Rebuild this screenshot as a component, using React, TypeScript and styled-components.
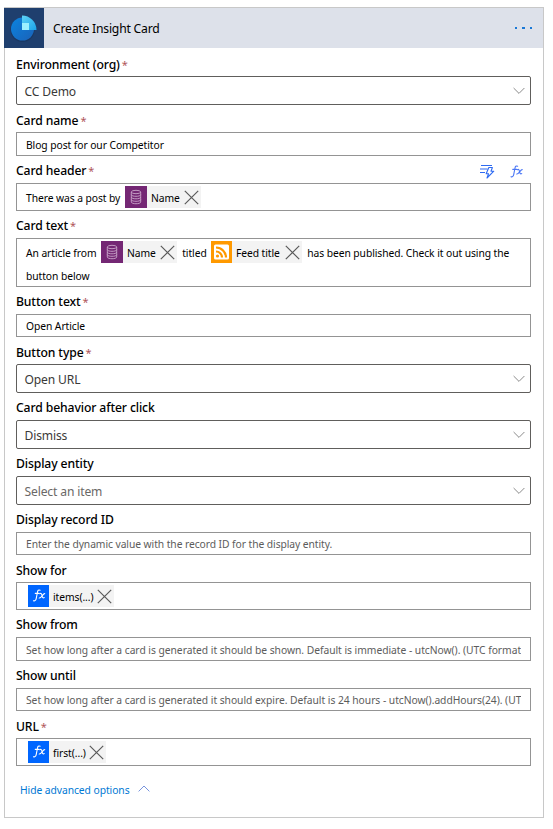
import React from 'react';
import styled, { createGlobalStyle } from 'styled-components';

const Global = createGlobalStyle`
  * { box-sizing: border-box; }
  body { margin: 0; background: #fff; font-family: "Noto Sans", "Open Sans", sans-serif; color: #000; }
`;

const Card = styled.section`
  width: 540px;
  height: 811px;
  margin: 7px 0 0 4px;
  border: 1px solid #c8c8c8;
  background: #fff;
`;

const Header = styled.header`
  display: flex;
  align-items: center;
  height: 40px;
  margin-left: -1px;
  background: #dde1ea;
`;

const Logo = styled.div`
  width: 40px;
  height: 40px;
  background: #1f3f6e;
  svg { display: block; }
`;

const Title = styled.h1`
  flex: 1;
  margin: 2px 0 0 9px;
  font-size: 12.2px;
  font-weight: 400;
  letter-spacing: -0.22px;
  line-height: 18px;
`;

const More = styled.button`
  display: flex;
  gap: 5px;
  padding: 0;
  margin: 0 11px 0 0;
  border: 0;
  background: none;
  i { width: 2.5px; height: 2px; background: #1a78d6; }
`;

const Form = styled.div`
  padding: 1px 12px 0 11px;
`;

const LabelRow = styled.div<{ $drop: number }>`
  display: flex;
  align-items: flex-start;
  justify-content: space-between;
  height: 27px;
  padding-top: ${p => p.$drop}px;
`;

const Label = styled.label`
  font-size: 12.2px;
  font-weight: 500;
  line-height: 18px;
  letter-spacing: -0.12px;
  white-space: nowrap;
`;

const Star = styled.span`
  margin-left: 2px;
  color: #b0565a;
  font-size: 11px;
  font-weight: 400;
`;

const Tools = styled.div`
  display: flex;
  align-items: center;
  gap: 15px;
  height: 17px;
  padding: 2px 8px 0 0;
`;

const Select = styled.div<{ $muted?: boolean }>`
  display: flex;
  align-items: center;
  justify-content: space-between;
  height: 29px;
  padding: 1px 5px 0 7.5px;
  border: 1px solid #605e5c;
  border-radius: 2px;
  font-size: 12.1px;
  letter-spacing: -0.14px;
  color: ${p => (p.$muted ? '#6a6866' : '#3a3938')};
`;

const Input = styled.div<{ $h: number; $muted?: boolean }>`
  height: ${p => p.$h}px;
  padding: 2px 9px 0 9px;
  border: 1px solid #949494;
  font-size: 10.3px;
  line-height: ${p => p.$h - 4}px;
  letter-spacing: -0.07px;
  color: ${p => (p.$muted ? '#5c5c5c' : '#000')};
`;

const Clip = styled.div`
  overflow: hidden;
  letter-spacing: -0.037px;
  white-space: nowrap;
`;

const Line = styled.div<{ $indent?: number }>`
  display: flex;
  align-items: center;
  height: 23px;
  line-height: 23px;
  padding-left: ${p => p.$indent ?? 0}px;
  white-space: nowrap;
`;

const Words = styled.span<{ $w?: number }>`
  width: ${p => (p.$w ? `${p.$w}px` : 'auto')};
  margin-top: 1px;
`;

const Token = styled.span`
  display: inline-flex;
  align-items: center;
  height: 22px;
  margin-top: -1px;
  padding-right: 2px;
  background: #f3f3f3;
  svg { flex: none; }
`;

const TokenName = styled.span<{ $w: number }>`
  width: ${p => p.$w}px;
  margin: 2px 4px 0 4px;
`;

const Footer = styled.a`
  display: flex;
  align-items: center;
  gap: 8px;
  margin: 15px 0 0 4px;
  height: 18px;
  font-size: 10.3px;
  letter-spacing: -0.06px;
  color: #0078d4;
  svg { margin-top: -3px; }
`;

const Chevron = ({ up }: { up?: boolean }) => (
  <svg width="12" height="8" viewBox="0 0 12 8" fill="none" stroke={up ? '#7894dd' : '#8a8a8a'} strokeWidth="1">
    <path d={up ? 'M.6 6.4 6 1l5.4 5.4' : 'M.6 1 6 6.4 11.4 1'} />
  </svg>
);

const Close = () => (
  <svg width="15" height="15" viewBox="0 0 15 15" stroke="#5a5a5a" strokeWidth="1.2">
    <path d="M.8.8l13.4 13.4M14.2.8.8 14.2" />
  </svg>
);

const FxShape = ({ color }: { color: string }) => (
  <g fill="none" stroke={color} strokeWidth="1.1" strokeLinecap="round">
    <path d="M7.6 1.2C6 .4 5.3 1.600 5 3L3.700 9.600C3.400 11.200 2.300 12.200 1 11.700M2.800 4.400H6.600" />
    <path d="M7.300 4.700c1.500-.9 1.900.4 2.200 2 .4 1.900 1 2.700 2.200 1.900M12.200 4.600C10.700 4.200 8.700 9.400 6.700 9" />
  </g>
);

const FxIcon = () => (
  <svg width="13" height="13" viewBox="0 0 13 13"><FxShape color="#4a76f5" /></svg>
);

const DynamicIcon = () => (
  <svg width="15" height="15" viewBox="0 0 15 15" fill="none" stroke="#2f6bf2" strokeWidth="1.1">
    <path d="M1 1.500H12M0 5H7.500M0 8.500H5" />
    <path d="M8.800 3.500h3.600L11 7.200h2.800L7 14 8.500 9.800H6.200Z" strokeLinejoin="round" />
  </svg>
);

const FxTile = () => (
  <svg width="21" height="22" viewBox="0 0 21 22">
    <rect width="21" height="22" fill="#0066ff" />
    <g transform="translate(4.500 4)"><FxShape color="#fff" /></g>
  </svg>
);

const DataTile = () => (
  <svg width="22" height="22" viewBox="0 0 22 22">
    <rect width="22" height="22" fill="#742774" />
    <g fill="none" stroke="#c9a5c9" strokeWidth=".9">
      <ellipse cx="11" cy="6" rx="4.700" ry="1.700" />
      <path d="M6.300 6v10c0 2.300 9.400 2.300 9.400 0V6M6.300 8.600c0 2.300 9.400 2.300 9.400 0M6.300 11.100c0 2.300 9.400 2.300 9.400 0M6.300 13.600c0 2.300 9.400 2.300 9.400 0" />
    </g>
  </svg>
);

const RssTile = () => (
  <svg width="21" height="22" viewBox="0 0 21 22">
    <rect width="21" height="22" fill="#ff9900" />
    <rect x="3" y="3.500" width="15" height="15" rx="1.500" fill="#fff" />
    <g fill="none" stroke="#ff9900" strokeWidth="2.200">
      <path d="M5 10.500a6 6 0 0 1 6 6M5 6.500a10 10 0 0 1 10 10" />
    </g>
    <circle cx="6.500" cy="15" r="1.600" fill="#ff9900" />
  </svg>
);

const InsightLogo = () => (
  <svg width="40" height="40" viewBox="0 0 40 40">
    <defs>
      <linearGradient id="disc" x1="0" y1="0" x2="1" y2="1">
        <stop offset="0" stopColor="#0a84e0" /><stop offset="1" stopColor="#1b62b8" />
      </linearGradient>
      <linearGradient id="slice" x1="0" y1="0" x2="1" y2="1">
        <stop offset="0" stopColor="#5fd3f7" /><stop offset="1" stopColor="#1ba3e8" />
      </linearGradient>
    </defs>
    <circle cx="18.500" cy="22" r="12" fill="#18335c" opacity=".6" />
    <circle cx="18.500" cy="21" r="11.500" fill="url(#disc)" />
    <path d="M18 7.500A14.500 14.500 0 0 1 32.500 22H18Z" fill="url(#slice)" />
    <rect x="18" y="15" width="7" height="7" fill="#9cf0ff" />
  </svg>
);

type FieldProps = { label: string; required?: boolean; drop?: number; tools?: boolean; children: React.ReactNode };
const Field = ({ label, required, drop = 6, tools, children }: FieldProps) => (
  <div>
    <LabelRow $drop={drop}>
      <Label>{label}{required && <Star>*</Star>}</Label>
      {tools && <Tools><DynamicIcon /><FxIcon /></Tools>}
    </LabelRow>
    {children}
  </div>
);

export default function App() {
  return (
    <>
      <Global />
      <Card>
        <Header>
          <Logo><InsightLogo /></Logo>
          <Title>Create Insight Card</Title>
          <More aria-label="More"><i /><i /><i /></More>
        </Header>
        <Form>
          <Field label="Environment (org)" required drop={7}><Select>CC Demo<Chevron /></Select></Field>
          <Field label="Card name" required drop={7}><Input $h={24}>Blog post for our Competitor</Input></Field>
          <Field label="Card header" required tools>
            <Input $h={28}>
              <Line>
                <Words $w={99}>There was a post by</Words>
                <Token><DataTile /><TokenName $w={29}>Name</TokenName><Close /></Token>
              </Line>
            </Input>
          </Field>
          <Field label="Card text" required>
            <Input $h={49}>
              <Line>
                <Words $w={75}>An article from</Words>
                <Token><DataTile /><TokenName $w={29}>Name</TokenName><Close /></Token>
                <Words $w={34}>&nbsp;&nbsp;titled</Words>
                <Token><RssTile /><TokenName $w={45}>Feed title</TokenName><Close /></Token>
                <Words>&nbsp;&nbsp;has been published. Check it out using the</Words>
              </Line>
              <Line><Words>button below</Words></Line>
            </Input>
          </Field>
          <Field label="Button text" required><Input $h={23}>Open Article</Input></Field>
          <Field label="Button type" required drop={7}><Select>Open URL<Chevron /></Select></Field>
          <Field label="Card behavior after click"><Select>Dismiss<Chevron /></Select></Field>
          <Field label="Display entity"><Select $muted>Select an item<Chevron /></Select></Field>
          <Field label="Display record ID">
            <Input $h={23} $muted>Enter the dynamic value with the record ID for the display entity.</Input>
          </Field>
          <Field label="Show for" drop={7}>
            <Input $h={28}>
              <Line $indent={2}><Token><FxTile /><TokenName $w={40}>items(...)</TokenName><Close /></Token></Line>
            </Input>
          </Field>
          <Field label="Show from">
            <Input $h={24} $muted>
              <Clip>Set how long after a card is generated it should be shown. Default is immediate - utcNow(). (UTC format)</Clip>
            </Input>
          </Field>
          <Field label="Show until">
            <Input $h={23} $muted>
              <Clip>Set how long after a card is generated it should expire. Default is 24 hours - utcNow().addHours(24). (UTC format)</Clip>
            </Input>
          </Field>
          <Field label="URL" required drop={7}>
            <Input $h={28}>
              <Line $indent={2}><Token><FxTile /><TokenName $w={32}>first(...)</TokenName><Close /></Token></Line>
            </Input>
          </Field>
          <Footer>Hide advanced options<Chevron up /></Footer>
        </Form>
      </Card>
    </>
  );
}
